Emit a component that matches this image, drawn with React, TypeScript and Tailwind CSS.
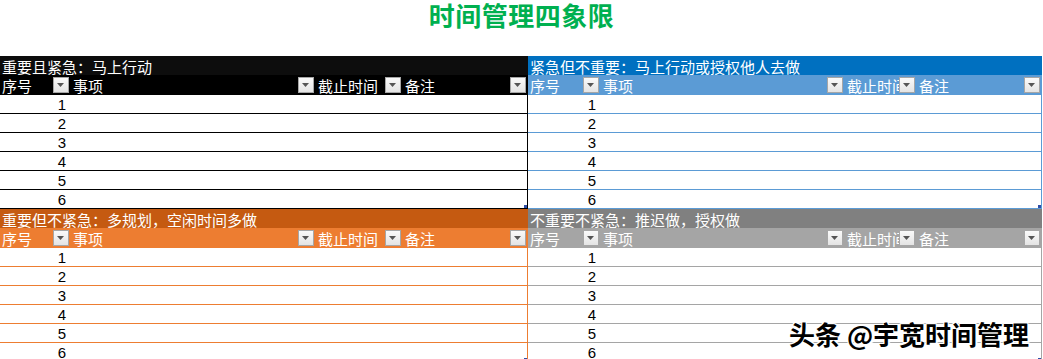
import React from "react";

// 四象限配置
type Quadrant = {
  title: string;
  titleBg: string;
  headBg: string;
  line: string;
  cols: number[];
  edge: string;
};

const quadrants: Quadrant[] = [
  {
    title: "重要且紧急：马上行动",
    titleBg: "bg-[#0d0d0d]",
    headBg: "bg-black",
    line: "border-black",
    cols: [71, 245, 87, 125],
    edge: "border-r border-black",
  },
  {
    title: "紧急但不重要：马上行动或授权他人去做",
    titleBg: "bg-[#0070c0]",
    headBg: "bg-[#5b9bd5]",
    line: "border-[#5b9bd5]",
    cols: [73, 244, 72, 125],
    edge: "border-r border-[#5b9bd5]",
  },
  {
    title: "重要但不紧急：多规划，空闲时间多做",
    titleBg: "bg-[#c55a11]",
    headBg: "bg-[#ed7d31]",
    line: "border-[#ed7d31]",
    cols: [71, 245, 87, 125],
    edge: "border-r border-[#ed7d31]",
  },
  {
    title: "不重要不紧急：推迟做，授权做",
    titleBg: "bg-[#808080]",
    headBg: "bg-[#a5a5a5]",
    line: "border-[#a5a5a5]",
    cols: [73, 244, 72, 125],
    edge: "border-r border-[#a5a5a5]",
  },
];

const headers = ["序号", "事项", "截止时间", "备注"];

const FilterButton = () => (
  <div className="w-[16px] h-[16px] shrink-0 border border-[#a6a6a6] bg-gradient-to-b from-[#fafafa] to-[#e4e4e4] flex items-center justify-center">
    <svg width="8" height="5" viewBox="0 0 8 5">
      <path d="M0 0 H7 L3.5 4 Z" fill="#555" />
    </svg>
  </div>
);

const QuadrantTable = ({ q, left }: { q: Quadrant; left: boolean }) => (
  <div className={left ? "w-[528px]" : "w-[514px]"}>
    {/* 标题 */}
    <div
      className={`${q.titleBg} h-[19px] text-white text-[15px] leading-[19px] pl-[2px] pt-[1px] whitespace-nowrap`}
    >
      {q.title}
    </div>
    {/* 表头 */}
    <div className={`${q.headBg} h-[20px] flex text-white text-[15px]`}>
      {headers.map((h, i) => (
        <div
          key={h}
          style={{ width: q.cols[i] }}
          className="flex items-center pl-[2px] pr-[2px]"
        >
          <span
            className={`flex-1 whitespace-nowrap leading-[20px] pt-[1px] ${
              !left && i === 2 ? "overflow-hidden" : ""
            }`}
          >
            {h}
          </span>
          <FilterButton />
        </div>
      ))}
    </div>
    {/* 行 */}
    {[1, 2, 3, 4, 5, 6].map((n) => (
      <div
        key={n}
        className={`h-[19px] border-b ${q.line} ${q.edge} flex items-end relative`}
      >
        <div
          style={{ width: q.cols[0] }}
          className="text-right pr-[5px] text-[15px] leading-[17px] font-['Liberation_Sans',sans-serif] text-black"
        >
          {n}
        </div>
        {n === 6 && (
          <div className="absolute right-0 bottom-0 w-[3px] h-[3px] bg-[#2f4fa8]" />
        )}
      </div>
    ))}
  </div>
);

export default function App() {
  return (
    <div className="w-[1043px] h-[359px] bg-white overflow-hidden relative font-['Noto_Sans_CJK_SC','Noto_Sans',sans-serif]">
      <div className="h-[56px] flex justify-center items-start">
        <h1 className="-mt-[4px] text-[26px] leading-[38px] font-bold text-[#00b050] tracking-[0.5px]">
          时间管理四象限
        </h1>
      </div>
      <div className="grid grid-cols-[528px_515px]">
        {quadrants.map((q, i) => (
          <QuadrantTable key={q.title} q={q} left={i % 2 === 0} />
        ))}
      </div>
      {/* 水印 */}
      <div className="absolute left-[789px] top-[316px] text-[26px] leading-[36px] text-black font-bold whitespace-nowrap [text-shadow:1px_1px_0_#fff,-1px_-1px_0_#fff,1px_-1px_0_#fff,-1px_1px_0_#fff,2px_2px_1px_#fff]">
        头条 @宇宽时间管理
      </div>
    </div>
  );
}
